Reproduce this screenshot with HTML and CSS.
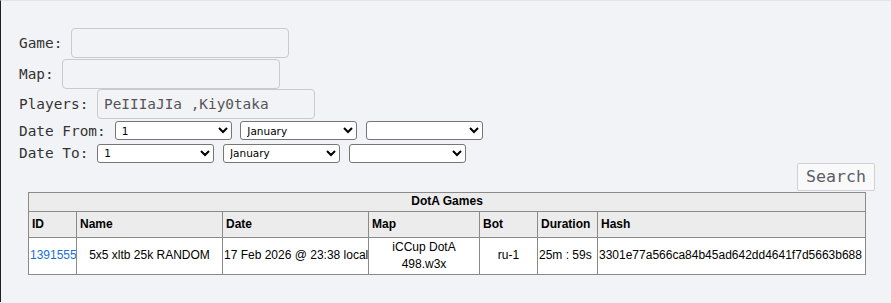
FILE: index.html
```html
<!DOCTYPE html>
<html>
<head>
<meta charset="utf-8">
<link rel="stylesheet" href="styles.css">
</head>
<body>
<div class="page">
  <form class="search-form">
    <div class="field field-game"><label>Game:</label><input class="text-input" type="text"></div>
    <div class="field field-map"><label>Map:</label><input class="text-input" type="text"></div>
    <div class="field field-players"><label>Players:</label><input class="text-input" type="text" value="PeIIIaJIa ,Kiy0taka"></div>
    <div class="date-row"><label>Date From:</label>
      <select class="sel"><option>1</option></select>
      <select class="sel"><option>January</option></select>
      <select class="sel"><option></option></select>
    </div>
    <div class="date-row"><label>Date To:</label>
      <select class="sel"><option>1</option></select>
      <select class="sel"><option>January</option></select>
      <select class="sel"><option></option></select>
    </div>
    <div class="button-row"><button type="button" class="search-btn">Search</button></div>
  </form>
  <table class="games">
    <colgroup>
      <col class="c-id"><col class="c-name"><col class="c-date"><col class="c-map"><col class="c-bot"><col class="c-dur"><col class="c-hash">
    </colgroup>
    <thead>
      <tr><th class="title" colspan="7">DotA Games</th></tr>
      <tr class="heads"><th>ID</th><th>Name</th><th>Date</th><th>Map</th><th>Bot</th><th>Duration</th><th>Hash</th></tr>
    </thead>
    <tbody>
      <tr>
        <td><a href="#" class="id-link">1391555</a></td>
        <td class="center">5x5 xltb 25k RANDOM</td>
        <td>17 Feb 2026 @ 23:38 local</td>
        <td class="center">iCCup DotA<br>498.w3x</td>
        <td class="center">ru-1</td>
        <td>25m : 59s</td>
        <td>3301e77a566ca84b45ad642dd4641f7d5663b688</td>
      </tr>
    </tbody>
  </table>
</div>
</body>
</html>
```
FILE: styles.css
```css
html, body {
  margin: 0;
  padding: 0;
}
body {
  background: #f2f3f7;
  border-left: 1px solid #1f2026;
  border-top: 1px solid #e2e3e8;
  min-height: 302px;
  box-sizing: border-box;
}
.page {
  padding: 27px 16px 0 18px;
}
.search-form {
  display: flex;
  flex-direction: column;
  font-family: "DejaVu Sans Mono", monospace;
  font-size: 14.4px;
  color: #333;
}
.field {
  display: flex;
  align-items: center;
  gap: 8.7px;
  height: 30px;
  margin-bottom: 0.5px;
}
.text-input {
  width: 218px;
  height: 30px;
  box-sizing: border-box;
  border: 1px solid #c9cacd;
  border-radius: 4px;
  background: transparent;
  padding: 0 6px;
  font-family: "DejaVu Sans Mono", monospace;
  font-size: 14.4px;
  color: #555;
  outline: none;
}
.date-row {
  display: flex;
  align-items: center;
  gap: 8.7px;
  height: 22.5px;
}
.date-row label {
  margin-right: 0.3px;
}
.sel {
  width: 117px;
  height: 19px;
  box-sizing: border-box;
  font-family: "DejaVu Sans", sans-serif;
  font-size: 10.5px;
  color: #000;
  background: #fff;
  border: 1px solid #767676;
  border-radius: 3px;
  padding: 0 2px;
}
.button-row {
  display: flex;
  justify-content: flex-end;
  margin-top: -2px;
}
.search-btn {
  height: 28px;
  width: 78px;
  box-sizing: border-box;
  font-family: "DejaVu Sans Mono", monospace;
  font-size: 16.6px;
  color: #5a5f66;
  background: #f9f9fa;
  border: 1px solid #cfd0d3;
  border-radius: 2px;
  padding: 0;
}
.games {
  margin: 1px 0 0 9px;
  border-collapse: collapse;
  table-layout: fixed;
  width: 837px;
  font-family: "Liberation Sans", Arial, sans-serif;
  font-size: 12px;
  color: #000;
  background: #fff;
}
.c-id { width: 48px; }
.c-name { width: 146px; }
.c-date { width: 146px; }
.c-map { width: 111px; }
.c-bot { width: 58px; }
.c-dur { width: 60px; }
.c-hash { width: 268px; }
.games th, .games td {
  border: 1px solid #8a8a8a;
  line-height: 17px;
  white-space: nowrap;
  overflow: hidden;
}
.games th {
  background: #ececec;
  text-align: left;
  padding: 4px 3px;
  font-weight: bold;
}
.games th.title {
  text-align: center;
  padding: 0 3px 1px;
}
.games td {
  padding: 1px 1px;
}
.games td.center {
  text-align: center;
}
.id-link {
  color: #1a6fd1;
  text-decoration: none;
}
```
